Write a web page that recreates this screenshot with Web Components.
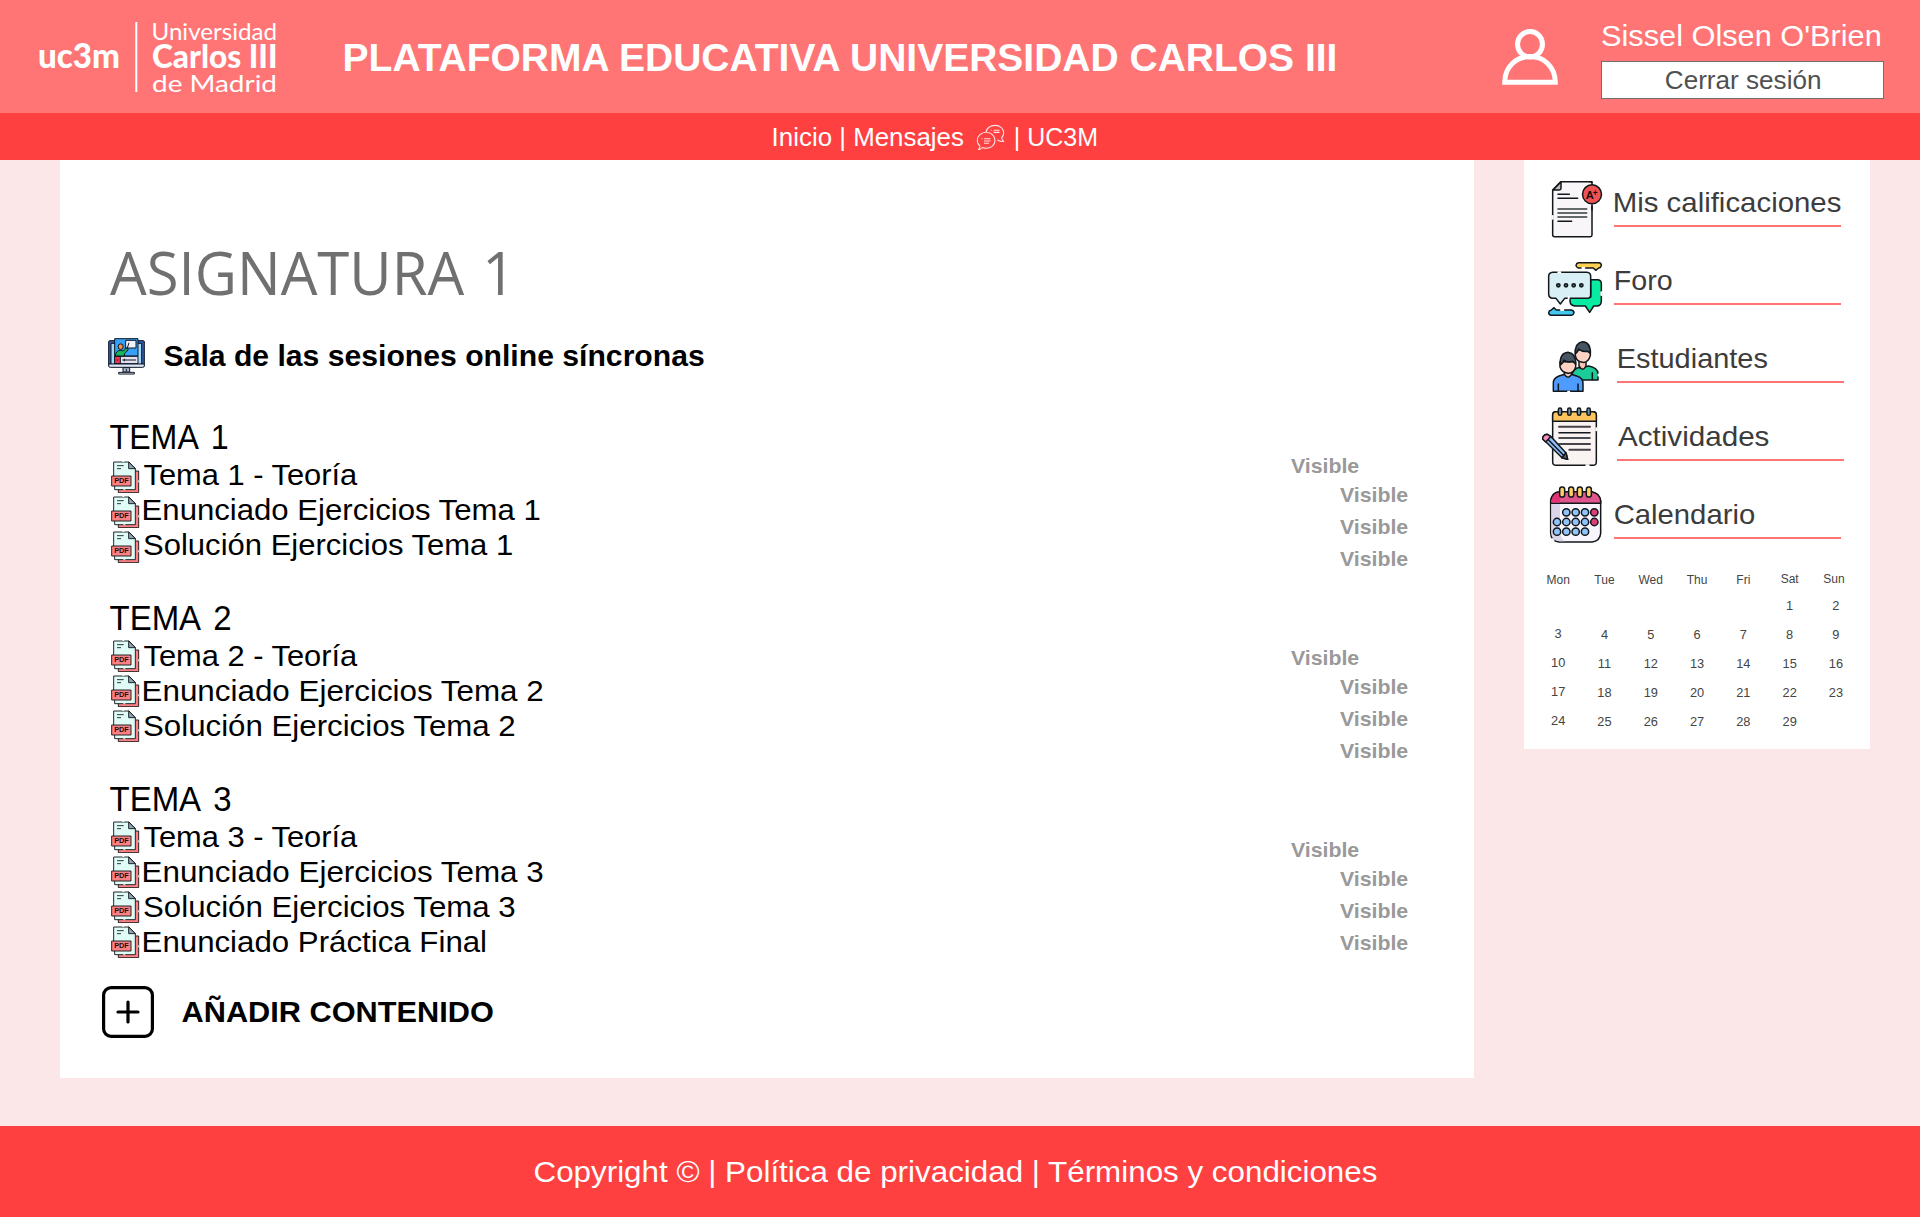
<!DOCTYPE html>
<html lang="es">
<head>
<meta charset="utf-8">
<title>Plataforma Educativa Universidad Carlos III</title>
<style>
html,body{margin:0;padding:0}
body{font-family:"Liberation Sans",sans-serif;background:#fce7e8;width:1920px;height:1217px;overflow:hidden}
</style>
</head>
<body>
<edu-app></edu-app>
<script>
const shadow = (el, html) => { el.attachShadow({mode:'open'}).innerHTML = html; };
const pen = document.createElement('canvas').getContext('2d');

/* A single line of text stretched to the given ink width. */
class FitText extends HTMLElement {
  connectedCallback() {
    shadow(this, `<style>:host{display:block;white-space:nowrap;font-variant-ligatures:none;flex:none}span{display:inline-block;transform-origin:0 50%}</style><span><slot></slot></span>`);
    const w = +this.getAttribute('w'), t = this.textContent, cs = getComputedStyle(this);
    pen.font = `${cs.fontWeight} ${parseFloat(cs.fontSize) * 10}px ${cs.fontFamily}`;
    const m = pen.measureText(t), left = m.actualBoundingBoxLeft / 10;
    const gaps = (t.split(' ').length - 1) * (parseFloat(cs.wordSpacing) || 0);
    const k = w / (left + m.actualBoundingBoxRight / 10 + gaps);
    const s = this.shadowRoot.querySelector('span');
    s.style.transform = `translateX(${left * k}px) scaleX(${k})`;
    this.style.width = w + 'px';
  }
}

class EduLogo extends HTMLElement {
  connectedCallback() {
    shadow(this, `<style>:host{display:block}svg{display:block;overflow:visible}text{fill:#fff;font-family:Lato,sans-serif}</style>
    <svg width="242" height="113" viewBox="38 0 242 113">
      <text x="38" y="68" font-size="34" font-weight="900" textLength="82" lengthAdjust="spacingAndGlyphs">uc3m</text>
      <rect x="135.3" y="22" width="2" height="70" fill="#fff"/>
      <text x="151.5" y="39.5" font-size="23" textLength="125.5" lengthAdjust="spacingAndGlyphs">Universidad</text>
      <text x="152" y="68" font-size="32.5" font-weight="900" textLength="125.5" lengthAdjust="spacingAndGlyphs">Carlos III</text>
      <text x="152" y="91.5" font-size="23" textLength="125" lengthAdjust="spacingAndGlyphs">de Madrid</text>
    </svg>`);
  }
}

class EduHeader extends HTMLElement {
  connectedCallback() {
    shadow(this, `<style>
    :host{display:flex;height:113px;background:#ff7575;color:#fff;align-items:flex-start}
    edu-logo{margin-left:38px;width:242px}
    .title{font-size:38px;font-weight:bold;line-height:116px;margin-left:64.5px}
    .avatar{margin:29px 0 0 164.5px;display:block;flex:none}
    .user{margin-left:43px;padding-top:19px;display:flex;flex-direction:column}
    .name{font-size:30px;line-height:34px;margin-left:1px}
    button{all:unset;box-sizing:border-box;margin-top:8px;width:283px;height:38px;border:1px solid #707070;background:#fff;color:#505050;font-size:26px;line-height:36px;display:flex;justify-content:center;padding-left:1px}
    </style>
    <edu-logo></edu-logo>
    <fit-text class="title" w="993">PLATAFORMA EDUCATIVA UNIVERSIDAD CARLOS III</fit-text>
    <svg class="avatar" width="56" height="56" viewBox="0 0 56 56" fill="none" stroke="#fff" stroke-width="5"><ellipse cx="28" cy="15.3" rx="12.5" ry="12.7"/><path d="M2.7 53.3C2.7 38 14 27.6 28 27.6S53.3 38 53.3 53.3Z"/></svg>
    <div class="user"><fit-text class="name" w="278">Sissel Olsen O'Brien</fit-text><button><fit-text w="154">Cerrar sesión</fit-text></button></div>`);
  }
}

class EduNav extends HTMLElement {
  connectedCallback() {
    shadow(this, `<style>:host{display:flex;height:47px;background:#ff4040;color:#fff;font-size:25px;line-height:49px;padding-left:774px;box-sizing:border-box}
    svg{display:block;margin:10px 10px 0 13px;flex:none}</style>
    <fit-text w="189">Inicio | Mensajes</fit-text>
    <svg width="30" height="28" viewBox="976 123 30 28" fill="none" stroke="#fff" stroke-opacity=".85" stroke-width="1.1"><path d="M986 131.8C987.2 127.8 991 125.4 995.3 125.4C1000 125.4 1003.7 128.7 1003.7 132.8C1003.7 134.8 1002.9 136.5 1001.7 137.7C1001.8 139.4 1003 140.6 1003.5 141.4C1001 141.9 998.7 140.8 997.3 140"/><path d="M978.6 149.5C979.3 148.5 980 147.5 979.9 146C978.3 144.7 977.3 142.8 977.3 140.5C977.3 135.9 981.3 132.2 986.2 132.2S995 135.9 995 140.5S991 148.3 986.2 148.3C984.8 148.3 983.5 148 982.5 147.5C981.5 148.7 980 149.5 978.6 149.5Z"/><path d="M984 138.8H990.5M984 141H990.5M984 143.2H989M981.5 138.8H982.500M993.500 130.200H999.500M993.500 132.400H999.500M990.800 130.200H991.800"/></svg>
    <fit-text w="80">| UC3M</fit-text>`);
  }
}

/* One downloadable document of a topic. */
class PdfItem extends HTMLElement {
  connectedCallback() {
    shadow(this, `<style>:host{display:flex;height:35px;font-size:29px;line-height:35px}
    svg{display:block;margin:var(--icon-top,1px) 0 0 1px;flex:none}fit-text{margin-left:4px}text{font:bold 21px "Liberation Sans",sans-serif;fill:#1c0f12}</style>
    <svg width="29" height="32" viewBox="60 61 87 96"><g stroke="#17181c" stroke-width="2.8" stroke-linejoin="round"><path d="M124 91H143V156H82V144H124Z" fill="#ff8083"/><path d="M68 64H114L133 83V147H71V134H68Z" fill="#e0fcf7"/><path d="M113 64L133 84H113Z" fill="#8ba8b6"/><rect x="62" y="106" width="58" height="30" fill="#ff8083"/></g><path d="M94 62.5H100M97 147H103M143 119V125" stroke="#e0fcf7" stroke-width="3"/><path d="M78 75H98M78 84H90" stroke="#1c2629" stroke-width="2.8"/><text x="69.5" y="128.5" textLength="44" lengthAdjust="spacingAndGlyphs">PDF</text></svg>
    <fit-text w="${this.getAttribute('w')}">${this.getAttribute('label')}</fit-text>`);
  }
}

class CourseTopic extends HTMLElement {
  connectedCallback() {
    shadow(this, `<style>:host{display:block}.h{font-size:35px;line-height:43px;word-spacing:5px}</style>
    <fit-text class="h" w="${this.getAttribute('w')}">${this.getAttribute('label')}</fit-text><slot></slot>`);
  }
}

/* Visibility markers: one for the topic and one for each document. */
class VisibleGroup extends HTMLElement {
  connectedCallback() {
    shadow(this, `<style>:host{display:flex;flex-direction:column;font-size:20.5px;font-weight:bold;color:#999;line-height:32px}
    fit-text{height:32px;margin-left:49px}fit-text:first-of-type{height:29px;margin-left:0}</style>` + '<fit-text w="67.5">Visible</fit-text>'.repeat(4));
  }
}

class CourseContent extends HTMLElement {
  connectedCallback() {
    shadow(this, `<style>
    :host{display:block;box-sizing:border-box;width:1414px;height:918px;background:#fff;padding:72px 0 0 50px;color:#000}
    h1{margin:0;font:400 60px/80px "Open Sans","Noto Sans",sans-serif;color:#707070;word-spacing:3px}
    .room{display:flex;margin:24px 0 0 -2px;height:40px;font-size:29px;font-weight:bold;line-height:40px}
    .room svg{display:block;margin-top:2px;flex:none}.room fit-text{margin-left:19px}
    .body{display:flex;margin-top:39px;height:545px}
    .topics{display:flex;flex-direction:column;gap:33px;width:1181px}
    .vis{display:flex;flex-direction:column;gap:67px;padding-top:35px}
    .t1{--icon-top:3px}
    .add{display:flex;align-items:center;margin:26px 0 0 -8px;font-size:29.5px;font-weight:bold;height:52px;line-height:52px}
    .add fit-text{margin-left:27.5px}.add svg{display:block}
    </style>
    <h1><fit-text w="393">ASIGNATURA 1</fit-text></h1>
    <div class="room"><svg width="37" height="37" viewBox="54 54 111 111"><g stroke="#0d1626" stroke-width="3" stroke-linejoin="round"><path d="M56 66Q56 62 60 62H160Q163 62 163 66V133H56Z" fill="#365aa8"/><path d="M63 70H155V133H63Z" fill="#a4dcf8"/><path d="M74 56H144V108H74Z" fill="#36a0f4"/><path d="M74 109H144V131H74Z" fill="#e3e1ef"/><path d="M74 109H91V131H74Z" fill="#ee3852"/><path d="M56 132H163V138Q163 142 158 142H61Q56 142 56 138Z" fill="#dce6f5"/><path d="M99 143H119V156H99Z" fill="#aebbd0"/><path d="M86 157H133V162H86Z" fill="#f1f4fb"/><path d="M107 61H138V84H107Z" fill="#f4f3fa"/><path d="M76 108Q77 92 91 91Q104 96 107 83L115 88Q108 98 103 101V108Z" fill="#16b65c"/><ellipse cx="92" cy="80" rx="7.5" ry="8.5" fill="#f39345"/></g><path d="M112 84L117 68M97 120H138M103 116V124M109 147V154" stroke="#0d1626" stroke-width="3"/><circle cx="82" cy="120" r="2.5" fill="#48131f"/></svg>
    <fit-text w="539.5">Sala de las sesiones online síncronas</fit-text></div>
    <div class="body"><div class="topics">
      <course-topic class="t1" label="TEMA 1" w="119"><pdf-item label="Tema 1 - Teoría" w="214"></pdf-item><pdf-item label="Enunciado Ejercicios Tema 1" w="396"></pdf-item><pdf-item label="Solución Ejercicios Tema 1" w="368.5"></pdf-item></course-topic>
      <course-topic label="TEMA 2" w="122"><pdf-item label="Tema 2 - Teoría" w="214"></pdf-item><pdf-item label="Enunciado Ejercicios Tema 2" w="399"></pdf-item><pdf-item label="Solución Ejercicios Tema 2" w="371"></pdf-item></course-topic>
      <course-topic label="TEMA 3" w="122"><pdf-item label="Tema 3 - Teoría" w="214"></pdf-item><pdf-item label="Enunciado Ejercicios Tema 3" w="399"></pdf-item><pdf-item label="Solución Ejercicios Tema 3" w="371"></pdf-item><pdf-item label="Enunciado Práctica Final" w="341"></pdf-item></course-topic>
    </div><div class="vis"><visible-group></visible-group><visible-group></visible-group><visible-group></visible-group></div></div>
    <div class="add"><svg width="52" height="52" viewBox="0 0 52 52" fill="none" stroke="#000" stroke-width="3.2"><rect x="1.6" y="1.6" width="48.8" height="48.8" rx="7.5"/><path d="M26 16V36M16 26H36" stroke-linecap="round"/></svg><fit-text w="311">AÑADIR CONTENIDO</fit-text></div>`);
  }
}

const dots = (xs, y, fill) => xs.map(x => `<circle cx="${x}" cy="${y}" r="11" fill="${fill}"/>`).join('');
const icons = {
  grades: ['78 30 222 234', `<path d="M128 90L152 65H241Q246 65 246 70V225Q246 230 241 230H134Q128 230 128 224Z" fill="#f8f6f8"/><path d="M129 90L153 66V85Q153 90 148 90Z" fill="#c0bdc0"/><path d="M128 168V176" stroke="#fff" stroke-width="6"/><path d="M144 103H178M144 115H203M144 184H185"/><path d="M144 147H230M144 159H230M144 171H230" stroke="#333c3b" stroke-width="5"/><circle cx="246" cy="103" r="34" fill="#fff" stroke="none"/><path d="M240 65H246V73M246 134V150"/><circle cx="246" cy="103" r="28.5" fill="#ef5353"/><text x="227" y="116" font-size="31" textLength="24" lengthAdjust="spacingAndGlyphs">A</text><text x="248" y="107" font-size="25">+</text>`],
  forum: ['78 264 222 234', `<path d="M205 308H266Q274 309 274 316Q273 323 266 324L257 331L250 324H205Q198 322 198 316Q199 309 205 308Z" fill="#ffd053"/><path d="M242 359H264Q274 361 274 371V424Q274 437 262 438H251L239 457L226 438H195Q181 436 180 424V412H242Z" fill="#08eba3"/><path d="M128 337H231Q242 338 242 349V404Q242 415 231 415H164L151 432L138 415H128Q117 414 116 403V348Q117 338 128 337Z" fill="#d8eff6"/><path d="M124 450L132 443L139 450H184Q192 452 192 458Q191 465 184 466H124Q116 465 116 458Q117 451 124 450Z" fill="#45c6ef"/><path d="M145 337H151M217 324H223M274 397V405M176 412V416M153 450H160" stroke="#fff" stroke-width="6"/><g fill="#536469"><circle cx="145" cy="376" r="5"/><circle cx="168" cy="376" r="5"/><circle cx="191" cy="376" r="5"/><circle cx="214" cy="376" r="5"/></g>`],
  students: ['78 498 222 234', `<path d="M184 661Q183 633 201 624Q218 622 236 618Q263 624 264 640V660H208Z" fill="#1bcc99"/><path d="M207 601H228V618Q218 637 207 618Z" fill="#f9c4b4"/><path d="M196 570H241V587Q235 609 218 607Q199 605 196 587Z" fill="#ffd2c4"/><path d="M196 582Q194 548 218 545Q242 546 241 580L233 574Q217 577 206 567Q204 576 196 582Z" fill="#475461"/><path d="M130 694V670Q129 655 147 648L164 643H184L202 649Q219 654 219 671V694Z" fill="#4e9cff"/><path d="M163 627H185V643Q174 660 163 643Z" fill="#f9c4b4"/><path d="M150 605H197V621Q192 640 174 640Q155 637 150 621Z" fill="#ffd2c4"/><path d="M151 615Q148 579 174 577Q199 580 197 613L188 604Q170 609 162 600Q160 610 151 615Z" fill="#475461"/><path d="M145 672V694M204 672V694M247 638V659"/><path d="M174 695H178M265 643V647" stroke="#fff" stroke-width="5"/>`],
  tasks: ['78 72 222 234', `<rect x="128" y="95" width="131" height="161" rx="10" fill="#f9f3f1"/><path d="M128 124V105Q128 95 138 95H249Q259 95 259 105V124Z" fill="#ffc45e"/><g fill="#7a95a0"><rect x="145" y="84" width="10" height="22" rx="5"/><rect x="173" y="84" width="10" height="22" rx="5"/><rect x="202" y="84" width="10" height="22" rx="5"/><rect x="231" y="84" width="10" height="22" rx="5"/></g><path d="M147 140H240M178 209H240M147 192H240" stroke="#45424a" stroke-width="6"/><path d="M147 158H240M147 174H240"/><path d="M259 145V151M229 256H236" stroke="#fff" stroke-width="6"/><path d="M98 177Q98 165 112 163L122 169L168 219L173 238L156 233L108 186Z" fill="#8fbdf8"/><path d="M98 177Q98 165 112 163L122 170L107 186Z" fill="#fb8ebd"/><path d="M115 179L162 227M168 218L155 233L173 238Z" fill="#576577"/>`],
  calendar: ['78 306 222 234', `<path d="M122 365Q124 337 149 335H244Q269 339 272 365V460Q270 483 246 486H147Q123 483 122 460Z" fill="#f8f6fc"/><path d="M124 371H150V455Q153 475 165 484H148Q125 481 124 460Z" fill="#dcd5ea" stroke="none"/><path d="M122 370V362Q127 336 149 335H244Q269 339 272 362V370Z" fill="#df568f"/><path d="M124 368V361Q129 340 150 337V368Z" fill="#e23377" stroke="none"/><g fill="#ffd064"><rect x="149" y="321" width="15" height="30" rx="7"/><rect x="176" y="321" width="15" height="30" rx="7"/><rect x="202" y="321" width="15" height="30" rx="7"/><rect x="229" y="321" width="15" height="30" rx="7"/></g>${dots([169,197,225],397,'#91c4fa')}${dots([141,169,197,225],426,'#91c4fa')}${dots([141,169,197,225],455,'#91c4fa')}${dots([253],397,'#d93f78')}${dots([253],426,'#d93f78')}<path d="M127 477L131 481" stroke="#fff" stroke-width="5"/>`]
};

class SideLink extends HTMLElement {
  connectedCallback() {
    const [box, art] = icons[this.getAttribute('icon')];
    shadow(this, `<style>:host{display:flex;height:78px;color:#3c3c3c}
    svg{display:block;flex:none}text{font-family:"Liberation Sans",sans-serif;font-weight:bold;fill:#160b0d;stroke:none}
    .link{box-sizing:border-box;width:227px;height:41px;margin:16px 0 0 var(--shift,4px);border-bottom:2px solid #ff7575;font-size:28.5px;line-height:32px}fit-text{margin-left:var(--inset,.5px)}</style>
    <svg width="74" height="78" viewBox="${box}" fill="none" stroke="#11171a" stroke-width="4.5" stroke-linecap="round" stroke-linejoin="round">${art}</svg>
    <div class="link"><fit-text w="${this.getAttribute('w')}">${this.getAttribute('label')}</fit-text></div>`);
  }
}

class MonthGrid extends HTMLElement {
  connectedCallback() {
    const names = ['Mon','Tue','Wed','Thu','Fri','Sat','Sun'];
    let html = names.map((n, i) => `<span class="n n${i}">${n}</span>`).join('') + '<span></span>'.repeat(5);
    for (let d = 1; d < 30; d++) html += `<span class="${d % 7 === 3 ? 'up' : ''}">${d}</span>`;
    shadow(this, `<style>:host{display:grid;grid-template-columns:repeat(7,46.3px);grid-template-rows:25.5px repeat(5,29px);font-size:12.8px;color:#444;line-height:29px;text-align:center}
    .n{font-size:12px;line-height:31px}.n5,.n6{line-height:29px}.n6{margin-right:4px}.up{line-height:27px}</style>` + html);
  }
}

class EduSidebar extends HTMLElement {
  connectedCallback() {
    shadow(this, `<style>:host{display:block;box-sizing:border-box;width:346px;height:589px;background:#fff;padding:10px 0 0 12px}
    .in{--shift:7px}month-grid{margin:5px 0 0 -1px}</style>
    <side-link icon="grades" label="Mis calificaciones" w="225.5" style="--inset:1px"></side-link>
    <side-link icon="forum" label="Foro" w="55.5" style="--inset:2px"></side-link>
    <side-link class="in" icon="students" label="Estudiantes" w="148" style="--inset:2px"></side-link>
    <side-link class="in" icon="tasks" label="Actividades" w="150.5"></side-link>
    <side-link icon="calendar" label="Calendario" w="139" style="--inset:1px"></side-link>
    <month-grid></month-grid>`);
  }
}

class EduFooter extends HTMLElement {
  connectedCallback() {
    shadow(this, `<style>:host{display:flex;height:91px;background:#ff4040;color:#fff;font-size:29.5px;line-height:91px;padding-left:535px;box-sizing:border-box}</style>
    <fit-text w="842">Copyright © | Política de privacidad | Términos y condiciones</fit-text>`);
  }
}

class EduApp extends HTMLElement {
  connectedCallback() {
    shadow(this, `<style>:host{display:flex;flex-direction:column;height:1217px}main{display:flex;align-items:flex-start;gap:50px;padding-left:60px;height:966px}</style>
    <edu-header></edu-header><edu-nav></edu-nav>
    <main><course-content></course-content><edu-sidebar></edu-sidebar></main>
    <edu-footer></edu-footer>`);
  }
}

Object.entries({'fit-text':FitText,'edu-logo':EduLogo,'edu-header':EduHeader,'edu-nav':EduNav,'pdf-item':PdfItem,'course-topic':CourseTopic,'visible-group':VisibleGroup,'course-content':CourseContent,'side-link':SideLink,'month-grid':MonthGrid,'edu-sidebar':EduSidebar,'edu-footer':EduFooter,'edu-app':EduApp}).forEach(([n, c]) => customElements.define(n, c));
</script>
</body>
</html>
